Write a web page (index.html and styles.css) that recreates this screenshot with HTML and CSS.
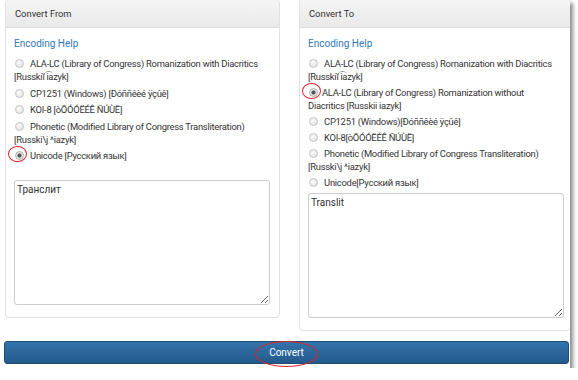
FILE: index.html
```html
<!DOCTYPE html>
<html lang="en">
<head>
    <meta charset="UTF-8">
    <title>Transliteration Converter</title>
    <link rel="stylesheet" href="styles.css">
</head>
<body>
    <div class="frame">
        <div class="panels">
            <div class="panel">
                <div class="panel-heading">Convert From</div>
                <div class="panel-body">
                    <a class="help" href="#">Encoding Help</a>
                    <ul class="options">
                        <li><input type="radio" name="from"> ALA-LC (Library of Congress) Romanization with Diacritics [Russkiĭ i͡azyk]</li>
                        <li><input type="radio" name="from"> CP1251 (Windows) [Ðóññêèé ÿçûê]</li>
                        <li><input type="radio" name="from"> KOI-8 [òÕÓÓËÉÊ ÑÚÙË]</li>
                        <li><input type="radio" name="from"> Phonetic (Modified Library of Congress Transliteration) [Russki\j ^iazyk]</li>
                        <li><span class="mark"><input type="radio" name="from" checked></span> Unicode [Русский язык]</li>
                    </ul>
                    <textarea class="box">Транслит</textarea>
                </div>
            </div>
            <div class="panel">
                <div class="panel-heading">Convert To</div>
                <div class="panel-body">
                    <a class="help" href="#">Encoding Help</a>
                    <ul class="options options-tight">
                        <li><input type="radio" name="to"> ALA-LC (Library of Congress) Romanization with Diacritics [Russkiĭ i͡azyk]</li>
                        <li><span class="mark"><input type="radio" name="to" checked></span>ALA-LC (Library of Congress) Romanization without Diacritics [Russkii iazyk]</li>
                        <li><input type="radio" name="to"> CP1251 (Windows)[Ðóññêèé ÿçûê]</li>
                        <li><input type="radio" name="to"> KOI-8[òÕÓÓËÉÊ ÑÚÙË]</li>
                        <li><input type="radio" name="to"> Phonetic (Modified Library of Congress Transliteration) [Russki\j ^iazyk]</li>
                        <li><input type="radio" name="to"> Unicode[Русский язык]</li>
                    </ul>
                    <textarea class="box">Translit</textarea>
                </div>
            </div>
        </div>
        <button class="convert"><span class="mark-wide">Convert</span></button>
    </div>
</body>
</html>
```

FILE: styles.css
```css
body {
    margin: 0;
    background: #fff;
    font-family: Roboto, 'Liberation Sans', sans-serif;
    font-size: 9.4px;
    color: #333;
}
.frame {
    width: 570px;
    height: 368px;
    background: #fff;
    box-shadow: 3px 3px 4px rgba(0,0,0,0.45);
    overflow: hidden;
    padding: 0 0 0 4px;
    box-sizing: border-box;
}
.panels {
    display: grid;
    grid-template-columns: 275px 272px;
    gap: 19px;
    align-items: start;
    margin-top: -1px;
    padding-left: 1px;
}
.panel {
    border: 1px solid #e2e2e2;
    border-radius: 4px;
    background: #fff;
}
.panel-heading {
    height: 27px;
    line-height: 28px;
    padding: 0 9px;
    background: linear-gradient(#f5f5f5, #e9e9e9);
    border-bottom: 1px solid #ddd;
    border-radius: 4px 4px 0 0;
}
.panel-body {
    padding: 9px 8px 12px 8px;
}
.help {
    display: block;
    color: #337ab7;
    text-decoration: none;
    font-size: 10px;
    line-height: 14px;
    margin-bottom: 6px;
}
.options {
    list-style: none;
    margin: 0 0 18px;
    padding: 0;
    line-height: 13px;
    letter-spacing: -0.25px;
}
.options li {
    margin-bottom: 3.5px;
}
.options-tight {
    margin-bottom: 4px;
}
.options-tight li {
    margin-bottom: 3px;
}
input[type="radio"] {
    appearance: none;
    -webkit-appearance: none;
    width: 9px;
    height: 9px;
    margin: 0 4px 0 1px;
    border: 1px solid #c4c4c4;
    border-radius: 50%;
    background: radial-gradient(circle at 40% 35%, #fbfbfb, #dcdcdc);
    vertical-align: -1px;
    box-sizing: border-box;
}
input[type="radio"]:checked {
    background: radial-gradient(circle, #555 0, #555 1.8px, #e6e6e6 2.4px);
    border-color: #b0b0b0;
}
.mark {
    position: relative;
}
.mark::after {
    content: '';
    position: absolute;
    left: -6px;
    top: -4px;
    width: 17px;
    height: 14px;
    border: 1.3px solid #d9262c;
    border-radius: 50%;
}
.box {
    display: block;
    width: 256px;
    height: 125px;
    box-sizing: border-box;
    border: 1px solid #ccc;
    border-radius: 3px;
    padding: 3px 2px;
    font-family: Roboto, 'Liberation Sans', sans-serif;
    font-size: 10px;
    color: #333;
    resize: both;
}
.convert {
    display: block;
    width: 565px;
    height: 23px;
    margin-top: 10px;
    border: 1px solid #204d74;
    border-radius: 3px;
    background: linear-gradient(#3373ac, #245a8b);
    color: #fff;
    font-family: Roboto, 'Liberation Sans', sans-serif;
    font-size: 10px;
    padding: 0;
}
.mark-wide {
    position: relative;
}
.mark-wide::after {
    content: '';
    position: absolute;
    left: -14px;
    top: -6px;
    width: 61px;
    height: 24px;
    border: 1.3px solid #d9262c;
    border-radius: 50%;
}
```
